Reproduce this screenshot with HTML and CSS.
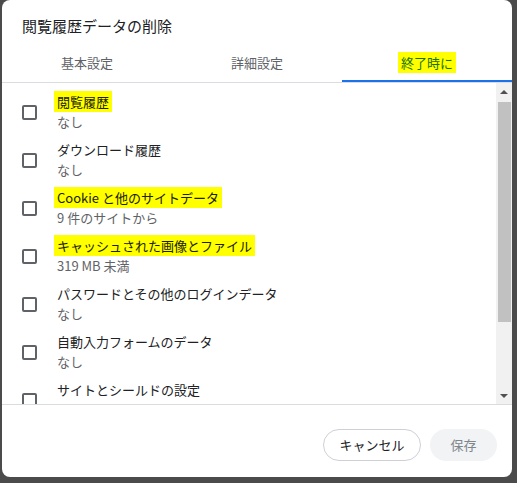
FILE: index.html
```html
<!DOCTYPE html>
<html lang="ja">
<head>
<meta charset="utf-8">
<link rel="stylesheet" href="styles.css">
</head>
<body>
<div class="dialog">
  <div class="title">閲覧履歴データの削除</div>
  <div class="tabs">
    <div class="tab">基本設定</div>
    <div class="tab">詳細設定</div>
    <div class="tab active"><span class="hl">終了時に</span></div>
  </div>
  <div class="scroller">
    <div class="list">
      <div class="item"><span class="cb"></span><div class="txt"><div class="label"><span class="hl">閲覧履歴</span></div><div class="sub">なし</div></div></div>
      <div class="item"><span class="cb"></span><div class="txt"><div class="label">ダウンロード履歴</div><div class="sub">なし</div></div></div>
      <div class="item"><span class="cb"></span><div class="txt"><div class="label"><span class="hl">Cookie と他のサイトデータ</span></div><div class="sub">9 件のサイトから</div></div></div>
      <div class="item"><span class="cb"></span><div class="txt"><div class="label"><span class="hl">キャッシュされた画像とファイル</span></div><div class="sub">319 MB 未満</div></div></div>
      <div class="item"><span class="cb"></span><div class="txt"><div class="label">パスワードとその他のログインデータ</div><div class="sub">なし</div></div></div>
      <div class="item"><span class="cb"></span><div class="txt"><div class="label">自動入力フォームのデータ</div><div class="sub">なし</div></div></div>
      <div class="item"><span class="cb"></span><div class="txt"><div class="label">サイトとシールドの設定</div><div class="sub">なし</div></div></div>
    </div>
    <div class="sbar">
      <div class="sbtn"><span class="arrow up"></span></div>
      <div class="thumb"></div>
      <div class="track"></div>
      <div class="sbtn"><span class="arrow down"></span></div>
    </div>
  </div>
  <div class="footer">
    <button class="btn cancel">キャンセル</button>
    <button class="btn save">保存</button>
  </div>
</div>
</body>
</html>
```

FILE: styles.css
```css
* { box-sizing: border-box; }
html, body {
  margin: 0;
  height: 100%;
}
body {
  background: #4b4b4b;
  font-family: "Noto Sans CJK JP", "Noto Sans", sans-serif;
  overflow: hidden;
}
.dialog {
  margin-left: 2px;
  width: 510px;
  height: 477px;
  background: #fff;
  border-radius: 8px;
  display: flex;
  flex-direction: column;
  overflow: hidden;
}
.title {
  height: 50px;
  padding: 15px 20px 0;
  font-size: 15px;
  line-height: 22px;
  color: #202124;
}
.tabs {
  display: flex;
  height: 33px;
  border-bottom: 1px solid #dadce0;
}
.tab {
  flex: 1;
  position: relative;
  text-align: center;
  font-size: 13px;
  line-height: 20px;
  padding-top: 3px;
  color: #5f6368;
}
.tab.active { color: #1a7300; }
.tab.active::after {
  content: "";
  position: absolute;
  left: 0;
  right: 0;
  bottom: 0;
  height: 2px;
  background: #1a73e8;
}
.hl {
  background: #ffff00;
  padding: 1px 3px;
  margin-left: -3px;
}
.tab .hl { margin-left: 0; }
.scroller {
  display: flex;
  height: 322px;
  border-bottom: 1px solid #dadce0;
  overflow: hidden;
}
.list {
  flex: 1;
  padding-top: 5px;
  overflow: hidden;
}
.item {
  display: flex;
  align-items: center;
  height: 48px;
  padding: 4px 0;
  flex-shrink: 0;
}
.cb {
  width: 15px;
  height: 15px;
  margin-left: 20px;
  margin-right: 20px;
  border: 2px solid #5f6368;
  border-radius: 2px;
  flex-shrink: 0;
}
.txt {
  font-size: 13px;
  line-height: 20px;
  white-space: nowrap;
}
.label { color: #202124; }
.label .hl { color: #202100; }
.sub { color: #5f6368; }
.sbar {
  width: 16px;
  background: #f1f1f1;
  display: flex;
  flex-direction: column;
}
.sbtn {
  height: 17px;
  display: flex;
  align-items: center;
  justify-content: center;
  flex-shrink: 0;
}
.arrow {
  width: 0;
  height: 0;
  border-left: 4px solid transparent;
  border-right: 4px solid transparent;
}
.arrow.up { border-bottom: 4px solid #505050; }
.arrow.down { border-top: 4px solid #505050; }
.thumb {
  height: 220px;
  margin: 2px 1px 0 2px;
  background: #c1c1c1;
  flex-shrink: 0;
}
.track { flex: 1; }
.footer {
  flex: 1;
  display: flex;
  justify-content: flex-end;
  align-items: flex-start;
  gap: 9px;
  padding: 24px 15px 0;
}
.btn {
  height: 32px;
  border-radius: 16px;
  font-family: inherit;
  font-size: 13px;
  line-height: 20px;
  padding: 0;
  white-space: nowrap;
}
.cancel {
  width: 98px;
  background: #fff;
  border: 1px solid #cfcfd8;
  color: #202124;
}
.save {
  width: 67px;
  background: #f1f3f4;
  border: none;
  color: #80868b;
}
```
